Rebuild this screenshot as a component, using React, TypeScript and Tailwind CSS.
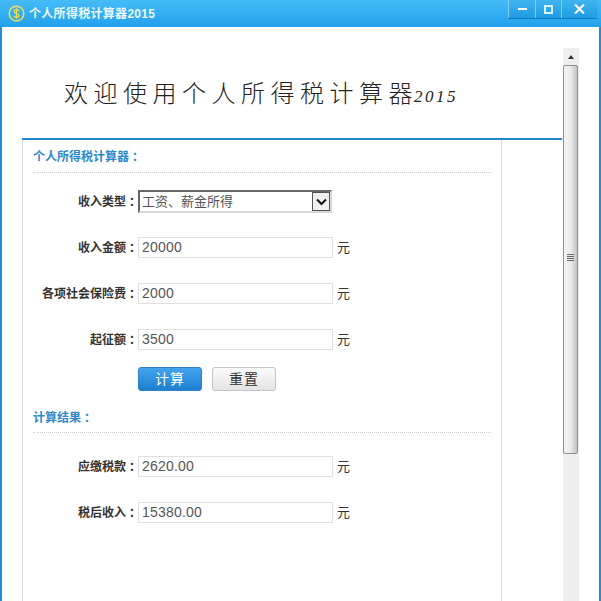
const cjk = "font-['Liberation_Sans','Noto_Sans_CJK_SC',sans-serif]";

function Label({ text }: { text: string }) {
  return (
    <div className="w-[105px] shrink-0 text-right text-[12px] font-bold leading-none text-[#333]">
      {text}
      <span className="ml-[3px] mr-[-3px]">：</span>
    </div>
  );
}

function Row({ label, value, className }: { label: string; value: string; className: string }) {
  return (
    <div className={`flex h-[21px] items-center ${className}`}>
      <Label text={label} />
      <div className="flex h-[21px] w-[195px] items-center border border-[#e0e0e0] bg-white pl-[3px] text-[14px] tracking-[0.2px] text-[#555]">{value}</div>
      <div className="ml-[4px] text-[13px] text-[#333]">元</div>
    </div>
  );
}

function SectionTitle({ text, className }: { text: string; className: string }) {
  return (
    <div className={`flex h-[33px] w-[458px] items-center border-b border-dotted border-[#d0d0d0] text-[12px] font-bold text-[#2f88cc] ${className}`}>
      {text}
      <span className="ml-[3px]">：</span>
    </div>
  );
}

export default function App() {
  return (
    <div className={`flex h-[601px] w-[601px] flex-col overflow-hidden bg-[#1f8fdc] ${cjk}`}>
      <div className="flex h-[27px] shrink-0 items-start justify-between bg-gradient-to-b from-[#45bcf8] to-[#20a0ec] pl-[8px] pr-[4px]">
        <div className="flex h-[27px] items-center gap-[4px]">
          <svg width="17" height="17" viewBox="0 0 17 17">
            <circle cx="8.500" cy="8.500" r="7.300" fill="none" stroke="#f2e04a" strokeWidth="1.500" />
            <path d="M11 6.200c-.6-1.100-1.500-1.500-2.600-1.500-1.400 0-2.400.8-2.400 1.900 0 2.500 5 1.300 5 3.800 0 1.200-1.100 1.900-2.600 1.900-1.200 0-2.200-.5-2.700-1.600M8.500 3.200v10.600" fill="none" stroke="#f2e04a" strokeWidth="1.200" />
          </svg>
          <span className="text-[12px] font-bold tracking-[0.3px] text-[#eaf8ff]">个人所得税计算器2015</span>
        </div>
        <div className="flex h-[19px] items-stretch border-b border-[#0f78bd]">
          <div className="flex w-[28px] items-center justify-center border-x border-[#7fd0f7] bg-gradient-to-b from-[#3fb4ef] to-[#1d9be4]">
            <div className="h-[2px] w-[9px] bg-white" />
          </div>
          <div className="flex w-[26px] items-center justify-center border-r border-[#7fd0f7] bg-gradient-to-b from-[#3fb4ef] to-[#1d9be4]">
            <div className="h-[9px] w-[9px] border-2 border-[#d6f2ff]" />
          </div>
          <div className="flex w-[35px] items-center justify-center bg-gradient-to-b from-[#3fb4ef] to-[#1d9be4]">
            <svg width="11" height="10" viewBox="0 0 11 10">
              <path d="M1 .5 10 9.500M10 .5 1 9.500" stroke="#fff" strokeWidth="2" />
            </svg>
          </div>
        </div>
      </div>

      <div className="mx-[2px] flex min-h-0 flex-1 bg-white pl-[20px]">
        <div className="w-[540px] shrink-0">
          <div className="flex h-[113px] items-center border-b-2 border-[#2587c9] pl-[42px] pt-[20px]">
            <span className="font-['Noto_Sans_CJK_SC',sans-serif] text-[24px] font-light leading-none tracking-[5.500px] text-[#222]">
              欢迎使用个人所得税计算器<span className="ml-[-4px] font-['Liberation_Serif',serif] text-[17px] italic tracking-[2.500px]">2015</span>
            </span>
          </div>
          <div className="h-[461px] w-[480px] border-x border-[#dcdcdc] pl-[10px]">
            <SectionTitle text="个人所得税计算器" className="pt-[2px]" />
            <div className="mt-[17px] flex h-[23px] items-center">
              <Label text="收入类型" />
              <div className="flex h-[23px] w-[194px] items-center justify-between border-2 border-b-[#d8d8d8] border-l-[#666] border-r-[#d8d8d8] border-t-[#666] bg-white pl-[2px]">
                <span className="text-[13px] text-[#555]">工资、薪金所得</span>
                <div className="flex h-[19px] w-[18px] items-center justify-center border border-[#555] bg-[#f0f0f0]">
                  <svg width="11" height="8" viewBox="0 0 11 8">
                    <path d="M1 1.500 5.500 6 10 1.500" fill="none" stroke="#111" strokeWidth="2" />
                  </svg>
                </div>
              </div>
            </div>
            <Row label="收入金额" value="20000" className="mt-[24px]" />
            <Row label="各项社会保险费" value="2000" className="mt-[25px]" />
            <Row label="起征额" value="3500" className="mt-[25px]" />
            <div className="ml-[105px] mt-[17px] flex gap-[10px]">
              <div className="flex h-[24px] w-[64px] items-center justify-center rounded-[3px] border border-[#2b82c9] bg-gradient-to-b from-[#42a5ee] to-[#1e7fd0] text-[14px] tracking-[1px] text-white">计算</div>
              <div className="flex h-[24px] w-[64px] items-center justify-center rounded-[3px] border border-[#c4c4c4] bg-gradient-to-b from-[#fbfbfb] to-[#e4e4e4] text-[14px] tracking-[1px] text-[#333]">重置</div>
            </div>
            <SectionTitle text="计算结果" className="mt-[9px] pt-[3px]" />
            <Row label="应缴税款" value="2620.00" className="mt-[23px]" />
            <Row label="税后收入" value="15380.00" className="mt-[25px]" />
          </div>
        </div>

        <div className="ml-[1px] mt-[21px] flex w-[16px] shrink-0 flex-col bg-[#eeeeee]">
          <div className="flex h-[17px] items-center justify-center">
            <div className="h-0 w-0 border-x-[3.500px] border-b-[4px] border-x-transparent border-b-[#333]" />
          </div>
          <div className="relative h-[389px] w-[15px] rounded-[2px] border border-[#8f8f8f] bg-gradient-to-r from-[#f4f4f4] via-[#ececec] to-[#c4c4c8]">
            <div className="absolute left-[3px] top-[188px] flex w-[7px] flex-col gap-[1px]">
              <div className="h-[1px] bg-[#666]" />
              <div className="h-[1px] bg-[#666]" />
              <div className="h-[1px] bg-[#666]" />
              <div className="h-[1px] bg-[#666]" />
            </div>
          </div>
        </div>
      </div>
    </div>
  );
}
